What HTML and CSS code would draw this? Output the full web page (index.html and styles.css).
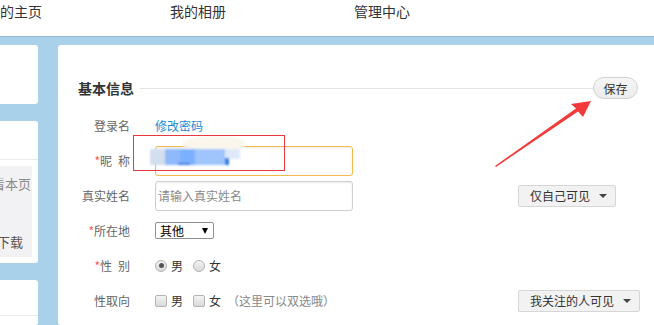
FILE: index.html
```html
<!DOCTYPE html>
<html lang="zh-CN">
<head>
  <meta charset="UTF-8">
  <meta name="viewport" content="width=device-width, initial-scale=1.0">
  <title>管理中心 - 基本信息</title>
  <link rel="stylesheet" href="styles.css">
</head>
<body>
  <div class="topnav">
    <div class="nav-inner">
      <a href="#">我的主页</a>
      <a href="#">我的相册</a>
      <a href="#">管理中心</a>
    </div>
  </div>

  <div class="wrap">
    <!-- 左侧栏 -->
    <div class="side">
      <div class="card card-a"></div>
      <div class="card card-b">
        <div class="card-head"></div>
        <div class="tips">
          <p class="tip-1">点击查看本页</p>
          <p class="tip-2">客户端下载</p>
        </div>
      </div>
      <div class="card card-c">
        <div class="card-head"></div>
      </div>
    </div>

    <!-- 基本信息 -->
    <div class="main">
      <div class="title-row">
        <h2>基本信息</h2>
        <span class="rule"></span>
        <button class="btn-save">保存</button>
      </div>

      <div class="form">
        <div class="row">
          <label>登录名</label>
          <div class="val"><a href="#" class="link">修改密码</a></div>
        </div>
        <div class="row">
          <label><em>*</em>昵&ensp;称</label>
          <div class="val"><input type="text" class="ipt ipt-focus"></div>
        </div>
        <div class="row">
          <label>真实姓名</label>
          <div class="val"><input type="text" class="ipt" placeholder="请输入真实姓名"></div>
          <button class="dd">仅自己可见<i class="caret-sm"></i></button>
        </div>
        <div class="row">
          <label><em>*</em>所在地</label>
          <div class="val"><span class="select">其他<i class="caret"></i></span></div>
        </div>
        <div class="row">
          <label><em>*</em>性&ensp;别</label>
          <div class="val opts">
            <span class="radio checked"></span><span class="opt-text">男</span>
            <span class="radio"></span><span class="opt-text">女</span>
          </div>
        </div>
        <div class="row">
          <label>性取向</label>
          <div class="val opts">
            <span class="check"></span><span class="opt-text">男</span>
            <span class="check"></span><span class="opt-text">女</span>
            <span class="hint">（这里可以双选哦）</span>
          </div>
          <button class="dd">我关注的人可见<i class="caret-sm"></i></button>
        </div>
      </div>
    </div>
  </div>

  <!-- 截图标注 -->
  <svg class="marks" width="654" height="325" viewBox="0 0 654 325">
    <defs>
      <filter id="soft" x="-20%" y="-50%" width="140%" height="200%">
        <feGaussianBlur stdDeviation="0.9"/>
      </filter>
    </defs>
    <g filter="url(#soft)">
      <ellipse cx="214" cy="144" rx="32" ry="8" fill="#faf6ec"/>
      <rect x="150" y="149" width="15" height="16" fill="#d3dfee"/>
      <rect x="165" y="149" width="15" height="16" fill="#8fb9fb"/>
      <rect x="180" y="149" width="15" height="16" fill="#7ab0fd"/>
      <rect x="195" y="149" width="30" height="16" fill="#9fc5fc"/>
      <rect x="225" y="149" width="15" height="10" fill="#dde9fb"/>
      <rect x="178" y="163" width="12" height="2" fill="#3a7de0"/>
      <rect x="225" y="158" width="4" height="7" fill="#2a7ae0"/>
    </g>
    <rect x="133.5" y="135.5" width="151" height="35" fill="none" stroke="#e8383d" stroke-width="1"/>
    <polygon points="495,166 576,108.6 571,104 591,101 583,117 578,111.4 496,167" fill="#f33a3a"/>
  </svg>
</body>
</html>
```

FILE: styles.css
```css
body {
  margin: 0;
  height: 325px;
  overflow: hidden;
  font-family: "Noto Sans CJK SC", sans-serif;
  font-size: 12px;
  color: #333;
  background-color: #a9d1e9;
}
.topnav {
  height: 36px;
  background: #fff;
  border-bottom: 1px solid #93bed9;
}
.nav-inner {
  display: flex;
  gap: 128px;
  margin-left: -14px;
}
.nav-inner a {
  font-size: 14px;
  line-height: 22px;
  color: #333;
  text-decoration: none;
}
.wrap {
  display: flex;
  gap: 20px;
  padding-top: 8px;
  margin-left: -162px;
}
.side {
  width: 200px;
  flex-shrink: 0;
  display: flex;
  flex-direction: column;
  gap: 17px;
}
.card {
  background: #fff;
  border-radius: 3px;
}
.card-a { height: 59px; }
.card-b { height: 142px; }
.card-b .card-head {
  height: 38px;
  border-bottom: 1px solid #ebebeb;
}
.card-c { height: 45px; }
.card-c .card-head {
  height: 35px;
  border-bottom: 1px solid #ebebeb;
}
.tips {
  margin: 6px 6px 0 0;
  height: 91px;
  box-sizing: border-box;
  padding: 8px 0 5px;
  background: #f2f2f4;
  display: flex;
  flex-direction: column;
  justify-content: space-between;
}
.tips p {
  margin: 0;
  font-size: 13px;
  line-height: 20px;
  text-align: right;
}
.tip-1 { color: #8a8a8a; padding-right: 1px; }
.tip-2 { color: #555; padding-right: 9px; }

.main {
  width: 560px;
  flex-shrink: 0;
  height: 240px;
  padding: 32px 20px 8px;
  background: #fff;
  border-radius: 3px;
}
.title-row {
  display: flex;
  align-items: center;
  height: 22px;
}
.title-row h2 {
  margin: 0;
  font-size: 14px;
  line-height: 22px;
  color: #333;
}
.rule {
  flex: 1;
  height: 1px;
  margin-left: 6px;
  background: #e3e3e3;
}
.btn-save {
  width: 45px;
  height: 22px;
  padding: 0;
  font: inherit;
  font-size: 12px;
  color: #333;
  border: 1px solid #d2d2d2;
  border-radius: 11px;
  background: linear-gradient(#f6f6f6, #ececec);
}
.form {
  margin-top: 9px;
}
.row {
  display: grid;
  grid-template-columns: 52px 338px auto;
  column-gap: 25px;
  align-items: center;
  height: 35px;
}
.row label {
  text-align: right;
  white-space: nowrap;
  color: #666;
  line-height: 16px;
}
.row label em {
  font-style: normal;
  color: #f55;
}
.val {
  display: flex;
  align-items: center;
}
.link {
  color: #168bd2;
  text-decoration: none;
}
.ipt {
  width: 198px;
  height: 30px;
  box-sizing: border-box;
  padding: 0 2px;
  font: inherit;
  font-size: 12px;
  color: #333;
  border: 1px solid #cfcfcf;
  border-radius: 3px;
  box-shadow: inset 0 1px 2px rgba(0,0,0,0.08);
  outline: none;
}
.ipt::placeholder { color: #8a8a8a; }
.ipt-focus { border-color: #f5b94b; }
.select {
  width: 59px;
  height: 17px;
  box-sizing: border-box;
  display: flex;
  align-items: center;
  justify-content: space-between;
  padding: 0 5px 0 4px;
  border: 1px solid #8f8f8f;
  border-radius: 2px;
  color: #000;
  line-height: 15px;
}
.caret {
  width: 0;
  height: 0;
  border-left: 3px solid transparent;
  border-right: 3px solid transparent;
  border-top: 6px solid #000;
}
.opts .radio, .opts .check {
  width: 12px;
  height: 12px;
  box-sizing: border-box;
  border: 1px solid #b3b3b3;
  background: linear-gradient(#f3f3f3, #d9d9d9);
  position: relative;
}
.radio { border-radius: 50%; }
.check { border-radius: 2px; }
.radio.checked::after {
  content: "";
  position: absolute;
  left: 2.5px;
  top: 2.5px;
  width: 5px;
  height: 5px;
  border-radius: 50%;
  background: #555;
}
.opt-text {
  margin: 0 10px 0 4px;
  color: #333;
}
.hint {
  margin-left: -4px;
  color: #888;
}
.dd {
  justify-self: start;
  height: 22px;
  display: inline-flex;
  align-items: center;
  gap: 9px;
  padding: 0 8px 0 11px;
  font: inherit;
  font-size: 12px;
  color: #333;
  white-space: nowrap;
  border: 1px solid #d6d6d6;
  border-radius: 2px;
  background: #f2f2f2;
}
.caret-sm {
  flex-shrink: 0;
  width: 0;
  height: 0;
  border-left: 4px solid transparent;
  border-right: 4px solid transparent;
  border-top: 4px solid #444;
}
.marks {
  position: absolute;
  left: 0;
  top: 0;
  pointer-events: none;
}
```
